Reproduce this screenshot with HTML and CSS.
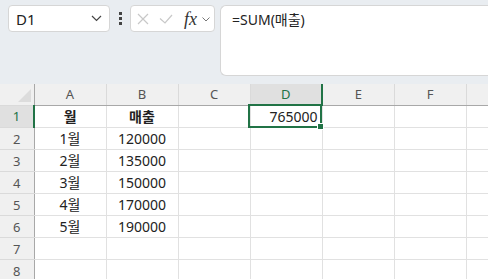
FILE: index.html
```html
<!DOCTYPE html>
<html lang="ko">
<head>
  <meta charset="UTF-8">
  <title>Sheet</title>
  <link rel="stylesheet" href="styles.css">
</head>
<body>
  <div class="toolbar">
    <div class="namebox">
      <span class="name">D1</span>
      <svg class="chev" width="11" height="7" viewBox="0 0 11 7"><path d="M1 1l4.5 4.5L10 1" fill="none" stroke="#444" stroke-width="1.2"/></svg>
    </div>
    <div class="dots"><i></i><i></i><i></i></div>
    <div class="fxbox">
      <svg class="ico-x" width="12" height="12" viewBox="0 0 12 12"><path d="M1 1l10 10M11 1L1 11" stroke="#c8c8c8" stroke-width="1.2"/></svg>
      <svg class="ico-ok" width="14" height="10" viewBox="0 0 14 10"><path d="M1 4.5l5 4.5 7-8" fill="none" stroke="#c8c8c8" stroke-width="1.2"/></svg>
      <span class="fx">fx</span>
      <svg class="ico-dd" width="8" height="5" viewBox="0 0 8 5"><path d="M0.5 0.5l3.5 3.5 3.5-3.5" fill="none" stroke="#777" stroke-width="1"/></svg>
    </div>
    <div class="formula">=SUM(매출)</div>
  </div>

  <div class="sheet">
    <table class="grid">
      <colgroup>
        <col class="w-head"><col class="w-col"><col class="w-col"><col class="w-col"><col class="w-col"><col class="w-col"><col class="w-col"><col class="w-rest">
      </colgroup>
      <tr class="colhead">
        <th class="corner"><span class="tri"></span></th>
        <th>A</th><th>B</th><th>C</th><th class="sel">D</th><th>E</th><th>F</th><th></th>
      </tr>
      <tr>
        <th class="sel">1</th>
        <td class="c bold">월</td><td class="c bold">매출</td><td></td><td class="r">765000</td><td></td><td></td><td></td>
      </tr>
      <tr>
        <th>2</th>
        <td class="c">1월</td><td class="c">120000</td><td></td><td></td><td></td><td></td><td></td>
      </tr>
      <tr>
        <th>3</th>
        <td class="c">2월</td><td class="c">135000</td><td></td><td></td><td></td><td></td><td></td>
      </tr>
      <tr>
        <th>4</th>
        <td class="c">3월</td><td class="c">150000</td><td></td><td></td><td></td><td></td><td></td>
      </tr>
      <tr>
        <th>5</th>
        <td class="c">4월</td><td class="c">170000</td><td></td><td></td><td></td><td></td><td></td>
      </tr>
      <tr>
        <th>6</th>
        <td class="c">5월</td><td class="c">190000</td><td></td><td></td><td></td><td></td><td></td>
      </tr>
      <tr>
        <th>7</th>
        <td></td><td></td><td></td><td></td><td></td><td></td><td></td>
      </tr>
      <tr>
        <th>8</th>
        <td></td><td></td><td></td><td></td><td></td><td></td><td></td>
      </tr>
    </table>
    <div class="selection"><span class="handle"></span></div>
  </div>
</body>
</html>
```

FILE: styles.css
```css
body {
  margin: 0;
  width: 488px;
  height: 279px;
  overflow: hidden;
  background: #ffffff;
  font-family: "Noto Sans", "Noto Sans CJK KR", sans-serif;
  color: #222;
}
.toolbar {
  height: 84px;
  background: #e9edf1;
  display: flex;
  align-items: flex-start;
  padding: 5px 0 0 8px;
  box-sizing: border-box;
}
.namebox {
  width: 102px;
  height: 27px;
  box-sizing: border-box;
  background: #fff;
  border: 1px solid #d6d6d6;
  border-radius: 4px;
  display: flex;
  align-items: center;
  justify-content: space-between;
  padding: 0 7px 0 7px;
}
.name {
  font-size: 15px;
  color: #222;
}
.dots {
  width: 20px;
  height: 27px;
  display: flex;
  flex-direction: column;
  align-items: center;
  justify-content: center;
  gap: 2px;
}
.dots i {
  display: block;
  width: 3px;
  height: 3px;
  background: #444;
}
.fxbox {
  width: 85px;
  height: 27px;
  box-sizing: border-box;
  background: #fff;
  border: 1px solid #d6d6d6;
  border-radius: 4px;
  display: flex;
  align-items: center;
  padding: 0 0 0 6px;
}
.ico-x {
  margin-top: 1px;
}
.ico-ok {
  margin-left: 10px;
  margin-top: 1px;
}
.fx {
  font-family: "Liberation Serif", "DejaVu Serif", serif;
  font-style: italic;
  font-size: 18px;
  color: #333;
  margin-left: 11px;
  line-height: 1;
}
.ico-dd {
  margin-left: 5px;
  margin-top: 1px;
}
.formula {
  margin-left: 5px;
  flex: 1;
  height: 71px;
  box-sizing: border-box;
  background: #fff;
  border: 1px solid #d6d6d6;
  border-right: none;
  border-radius: 6px 0 0 6px;
  padding: 3px 0 0 11px;
  font-size: 14px;
  color: #222;
}
.sheet {
  position: relative;
}
.grid {
  border-collapse: collapse;
  table-layout: fixed;
  width: 488px;
  font-size: 14px;
}
.w-head {
  width: 34px;
}
.w-col {
  width: 72px;
}
.w-rest {
  width: 22px;
}
.grid th, .grid td {
  height: 22px;
  padding: 0;
  box-sizing: border-box;
  white-space: nowrap;
  overflow: hidden;
}
.grid td {
  border: 1px solid #e1e1e1;
  border-top: none;
  border-left: none;
  line-height: 21px;
}
.colhead th {
  height: 21px;
  background: #f0f0f0;
  border-bottom: 1px solid #a8a8a8;
  border-right: 1px solid #dadada;
  font-weight: normal;
  font-size: 13px;
  color: #555;
}
.colhead th.corner {
  position: relative;
  border-right: 1px solid #a8a8a8;
}
.colhead th.sel {
  background: #e0e0e0;
  color: #217346;
  border-bottom: 2px solid #217346;
}
.tri {
  position: absolute;
  right: 3px;
  bottom: 3px;
  width: 0;
  height: 0;
  border-left: 13px solid transparent;
  border-bottom: 13px solid #dcdcdc;
}
tr th:first-child {
  background: #f0f0f0;
  border-right: 1px solid #a8a8a8;
  border-bottom: 1px solid #dadada;
  font-weight: normal;
  font-size: 13px;
  color: #555;
}
tr th.sel {
  background: #e0e0e0;
  color: #217346;
  border-right: 2px solid #217346;
}
.c {
  text-align: center;
}
.grid td.r {
  text-align: right;
  padding-right: 4px;
}
.bold {
  font-weight: bold;
}
.selection {
  position: absolute;
  left: 248px;
  top: 20px;
  width: 74px;
  height: 24px;
  box-sizing: border-box;
  border: 2px solid #217346;
}
.handle {
  position: absolute;
  right: -4px;
  bottom: -4px;
  width: 5px;
  height: 5px;
  background: #217346;
  border: 1px solid #fff;
}
```
